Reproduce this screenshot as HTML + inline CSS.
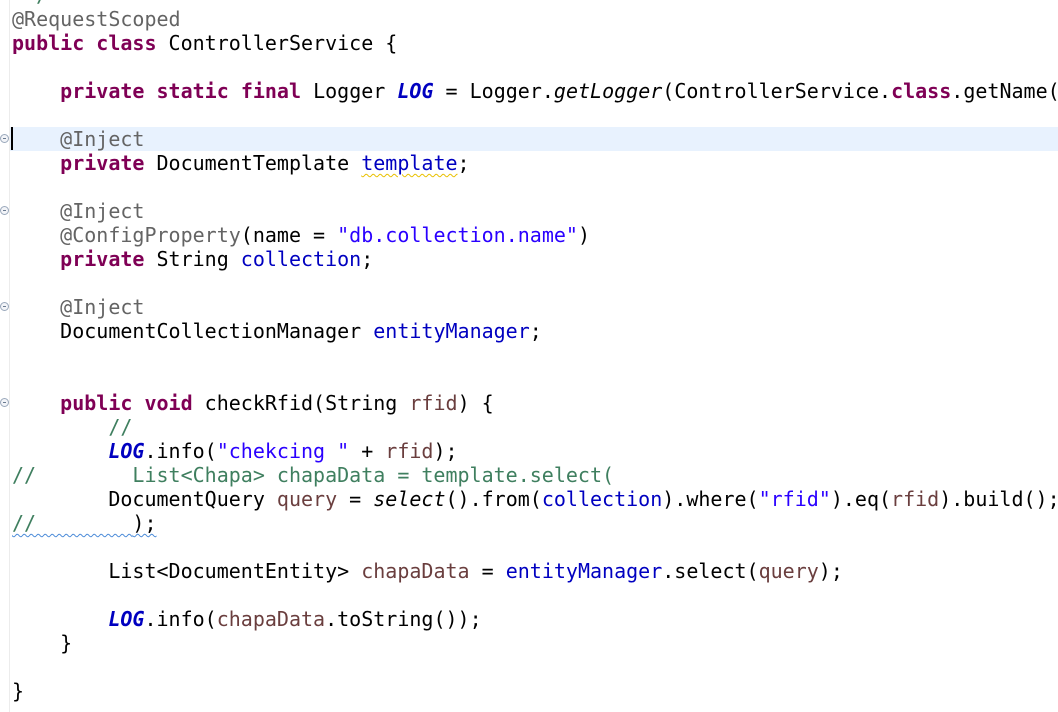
<!DOCTYPE html>
<html><head><meta charset="utf-8"><style>
html,body{margin:0;padding:0;background:#fff;width:1058px;height:712px;overflow:hidden}
.ruler{position:absolute;left:9px;top:0;width:1px;height:712px;background:#ececec}
.hl{position:absolute;left:10px;top:127px;width:1048px;height:24px;background:#e8f2fe}
.caret{position:absolute;left:11px;top:127px;width:2px;height:23px;background:#000}
.fold{position:absolute;left:0;width:9px;height:9px;border:1px solid #9aa8bb;border-radius:50%;box-sizing:border-box;background:#f2f4f8}
.fold:after{content:"";position:absolute;left:2px;top:3px;width:3px;height:1px;background:#6a7a90}
pre{position:absolute;left:12px;top:-17px;margin:0;font-family:"DejaVu Sans Mono","Liberation Mono",monospace;font-size:20px;line-height:24px;color:#000;white-space:pre}
.k{color:#7f0055;font-weight:bold}
.a{color:#646464}
.s{color:#2a00ff}
.f{color:#0000c0}
.sf{color:#0000c0;font-weight:bold;font-style:italic}
.v{color:#6a3e3e}
.c{color:#3f7f5f}
.i{font-style:italic}
.wy{text-decoration:underline wavy #e8c000;text-decoration-thickness:1px;text-underline-offset:3px}
.wb{text-decoration:underline wavy #4a8ad8;text-decoration-thickness:1px;text-underline-offset:3px}
</style></head><body>
<div class="ruler"></div>
<div class="hl"></div>
<div class="caret"></div>
<div class="fold" style="top:134px"></div>
<div class="fold" style="top:206px"></div>
<div class="fold" style="top:302px"></div>
<div class="fold" style="top:398px"></div>
<pre><span class="c"> */</span>
<span class="a">@RequestScoped</span>
<span class="k">public</span> <span class="k">class</span> ControllerService {

    <span class="k">private</span> <span class="k">static</span> <span class="k">final</span> Logger <span class="sf">LOG</span> = Logger.<span class="i">getLogger</span>(ControllerService.<span class="k">class</span>.getName());

    <span class="a">@Inject</span>
    <span class="k">private</span> DocumentTemplate <span class="f wy">template</span>;

    <span class="a">@Inject</span>
    <span class="a">@ConfigProperty</span>(name = <span class="s">"db.collection.name"</span>)
    <span class="k">private</span> String <span class="f">collection</span>;

    <span class="a">@Inject</span>
    DocumentCollectionManager <span class="f">entityManager</span>;


    <span class="k">public</span> <span class="k">void</span> checkRfid(String <span class="v">rfid</span>) {
        <span class="c">//</span>
        <span class="sf">LOG</span>.info(<span class="s">"chekcing "</span> + <span class="v">rfid</span>);
<span class="c">//        List&lt;Chapa&gt; chapaData = template.select(</span>
        DocumentQuery <span class="v">query</span> = <span class="i">select</span>().from(<span class="f">collection</span>).where(<span class="s">"rfid"</span>).eq(<span class="v">rfid</span>).build();
<span class="c wb">//        </span><span class="wb">);</span>

        List&lt;DocumentEntity&gt; <span class="v">chapaData</span> = <span class="f">entityManager</span>.select(<span class="v">query</span>);

        <span class="sf">LOG</span>.info(<span class="v">chapaData</span>.toString());
    }

}</pre>
</body></html>
